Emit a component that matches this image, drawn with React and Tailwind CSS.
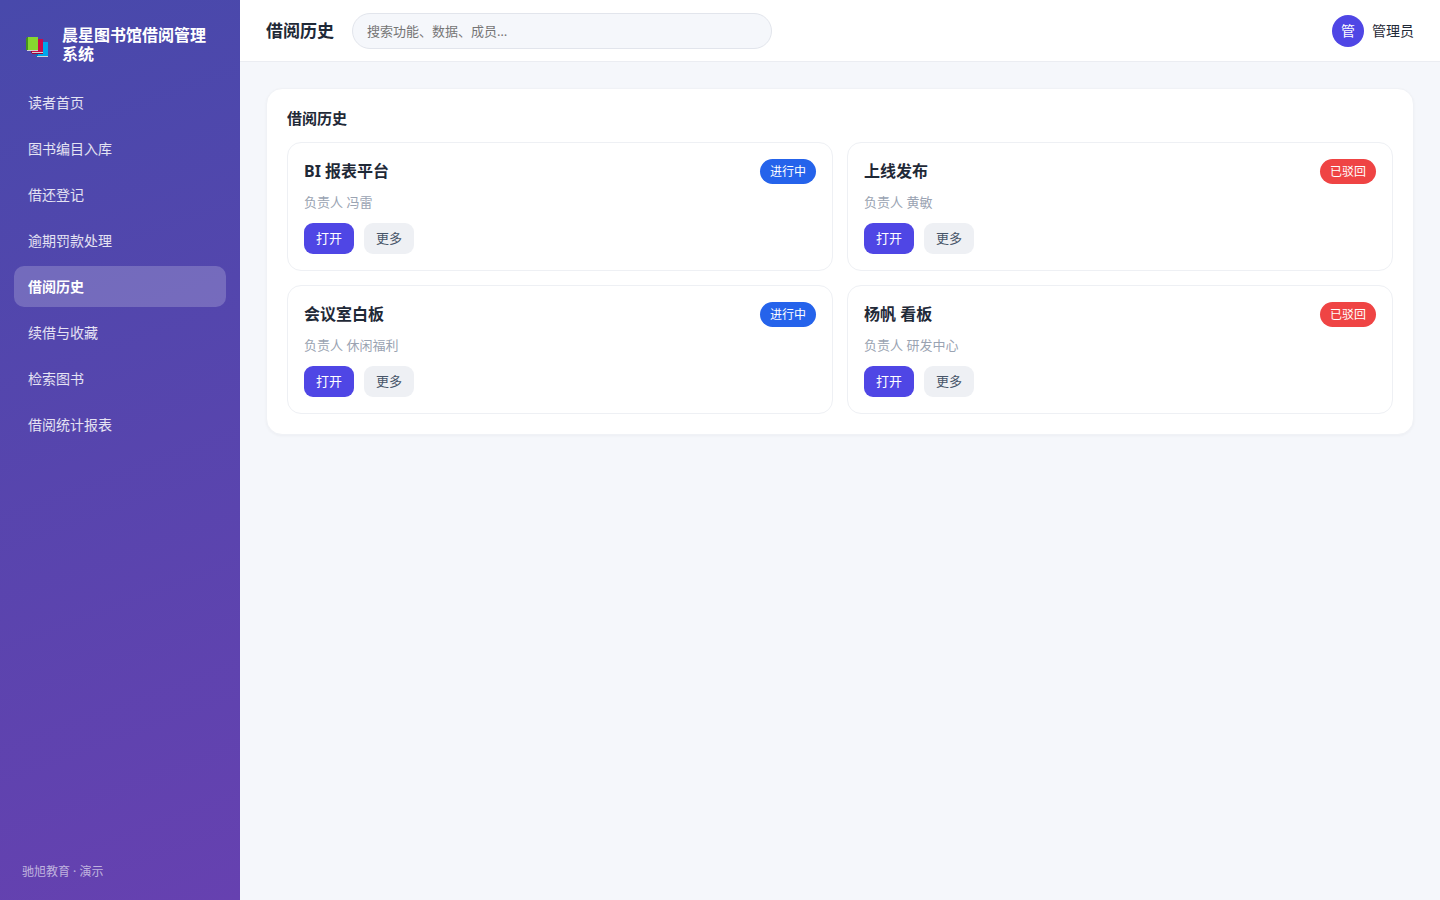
const navItems = [
  '读者首页',
  '图书编目入库',
  '借还登记',
  '逾期罚款处理',
  '借阅历史',
  '续借与收藏',
  '检索图书',
  '借阅统计报表'
];

const records = [
  { title: 'BI 报表平台', owner: '冯雷', status: '进行中' },
  { title: '上线发布', owner: '黄敏', status: '已驳回' },
  { title: '会议室白板', owner: '休闲福利', status: '进行中' },
  { title: '杨帆 看板', owner: '研发中心', status: '已驳回' }
];

const statusStyles = {
  进行中: 'bg-[#2563eb]',
  已驳回: 'bg-[#ef4444]'
};

// Three stacked books: blue at the back, red, then green in front.
function BooksLogo() {
  return (
    <svg width="26" height="26" viewBox="0 0 26 26" shapeRendering="crispEdges" className="shrink-0" aria-hidden="true">
      <path d="M14 10h9l1 1v13H13v-2h1z" fill="#00a6ed" />
      <path d="M12 22h2v2h-1v1h-1z" fill="#0074ba" />
      <path d="M13 24h11v1H13z" fill="#d3d3d3" />
      <path d="M10 7h8l1 1v12H8v-2h2z" fill="#ca0b4a" />
      <path d="M7 19h1v2h11v1H8l-1-1z" fill="#990838" />
      <path d="M8 20h11v1H8z" fill="#d3d3d3" />
      <path d="M4 5h9l1 1v12H4z" fill="#86d72f" />
      <path d="M3 5h1v13H3v1L2 18V6z" fill="#44911b" />
      <path d="M3 18h11v1H3z" fill="#d3d3d3" />
    </svg>
  );
}

function Sidebar() {
  return (
    <aside className="flex w-60 shrink-0 flex-col bg-[linear-gradient(160deg,#4849ab,#6641b0)] text-white">
      <div className="flex items-center gap-3 px-6 pt-[26px]">
        <BooksLogo />
        <span className="text-base leading-[19px] font-bold">晨星图书馆借阅管理系统</span>
      </div>
      <nav className="flex flex-col gap-[5px] px-3.5 pt-[18px]">
        {navItems.map((item) => (
          <a
            key={item}
            href="#"
            className={`flex h-[41px] items-center rounded-[10px] px-3.5 text-sm ${
              item === '借阅历史' ? 'bg-white/20 font-bold' : 'text-white/85'
            }`}
          >
            {item}
          </a>
        ))}
      </nav>
      <p className="mt-auto px-[22px] pb-5 text-xs leading-4 text-white/60">驰旭教育 · 演示</p>
    </aside>
  );
}

function Topbar() {
  return (
    <header className="flex h-[62px] items-center gap-[18px] border-b border-[#ebedf2] bg-white px-[26px]">
      <h1 className="text-[17px] font-bold">借阅历史</h1>
      <input
        type="search"
        aria-label="搜索"
        placeholder="搜索功能、数据、成员…"
        className="h-9 w-[420px] rounded-full border border-[#e2e5ec] bg-[#f5f7fb] px-3.5 text-[13px] placeholder:text-[#757575]"
      />
      <div className="ml-auto flex items-center gap-2 text-sm">
        <span className="grid size-8 place-items-center rounded-full bg-[#4f46e5] text-sm text-white">管</span>
        管理员
      </div>
    </header>
  );
}

function RecordCard({ title, owner, status }) {
  return (
    <article className="rounded-[14px] border border-[#eef0f4] p-4">
      <div className="flex items-center justify-between">
        <h3 className="text-base leading-[25px] font-bold">{title}</h3>
        <span className={`rounded-full px-2.5 text-xs leading-[25px] text-white ${statusStyles[status]}`}>{status}</span>
      </div>
      <p className="mt-2 text-[13px] leading-5 text-[#9aa3b2]">负责人 {owner}</p>
      <div className="mt-[11px] flex gap-2.5 text-[13px] leading-[31px]">
        <button type="button" className="rounded-[9px] bg-[#4f46e5] px-3 text-white">
          打开
        </button>
        <button type="button" className="rounded-[9px] bg-[#eef0f4] px-3 text-[#475569]">
          更多
        </button>
      </div>
    </article>
  );
}

export default function App() {
  return (
    <div className="flex min-h-screen bg-[#f5f7fb] font-['Noto_Sans','Noto_Sans_CJK_SC',sans-serif] text-[#1f2937]">
      <Sidebar />
      <div className="flex min-w-0 flex-1 flex-col">
        <Topbar />
        <main className="p-[26px]">
          <section className="rounded-2xl border border-[#f0f2f6] bg-white p-5 shadow-[0_1px_3px_rgba(15,23,42,0.04)]">
            <h2 className="text-[15px] leading-[18px] font-bold">借阅历史</h2>
            <div className="mt-[15px] grid grid-cols-2 gap-3.5">
              {records.map((record) => (
                <RecordCard key={record.title} {...record} />
              ))}
            </div>
          </section>
        </main>
      </div>
    </div>
  );
}
